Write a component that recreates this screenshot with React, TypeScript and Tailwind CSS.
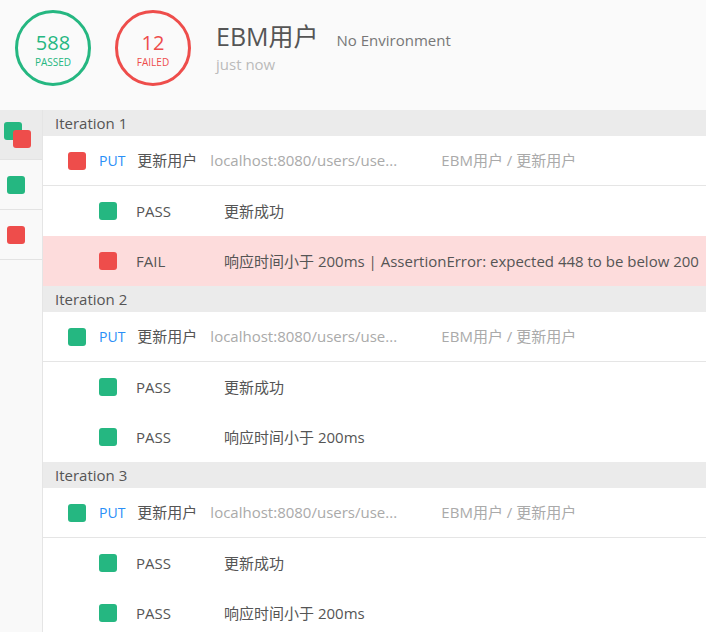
const GREEN = "bg-[#25b781]";
const RED = "bg-[#ee4d4b]";

type Test = { pass: boolean; text: string };
type Iteration = { name: string; pass: boolean; tests: Test[] };

const iterations: Iteration[] = [
  {
    name: "Iteration 1",
    pass: false,
    tests: [
      { pass: true, text: "更新成功" },
      { pass: false, text: "响应时间小于 200ms | AssertionError: expected 448 to be below 200" },
    ],
  },
  {
    name: "Iteration 2",
    pass: true,
    tests: [
      { pass: true, text: "更新成功" },
      { pass: true, text: "响应时间小于 200ms" },
    ],
  },
  {
    name: "Iteration 3",
    pass: true,
    tests: [
      { pass: true, text: "更新成功" },
      { pass: true, text: "响应时间小于 200ms" },
    ],
  },
];

const Square = ({ pass }: { pass: boolean }) => (
  <div className={`w-[18px] h-[18px] rounded-[3px] shrink-0 ${pass ? GREEN : RED}`} />
);

const Counter = ({ value, label, pass }: { value: number; label: string; pass: boolean }) => (
  <div
    className={`w-[76px] h-[76px] rounded-full border-[3px] flex flex-col items-center justify-center ${
      pass ? "border-[#25b781] text-[#25b781]" : "border-[#ee4d4b] text-[#ee4d4b]"
    }`}
  >
    <div className="text-[20px] leading-[24px] mt-[2px]">{value}</div>
    <div className="text-[10px] leading-[12px] mt-[1px]">{label}</div>
  </div>
);

export default function App() {
  return (
    <div
      className="w-[706px] h-[632px] overflow-hidden bg-white text-[#555]"
      style={{ fontFamily: '"Open Sans", "Noto Sans CJK SC", sans-serif' }}
    >
      <header className="h-[110px] bg-[#fafafa] flex items-start pt-[10px] pl-[15px]">
        <div className="flex gap-[24px]">
          <Counter value={588} label="PASSED" pass />
          <Counter value={12} label="FAILED" pass={false} />
        </div>
        <div className="ml-[25px] mt-[10px]">
          <div className="flex items-baseline">
            <span className="text-[25px] leading-[32px] text-[#555]">EBM用户</span>
            <span className="ml-[18px] text-[15px] text-[#777]">No Environment</span>
          </div>
          <div className="text-[15px] leading-[20px] text-[#bbb] mt-[2px]">just now</div>
        </div>
      </header>

      <div className="flex">
        <aside className="w-[43px] shrink-0 h-[522px] bg-[#f9f9f9] border-r border-[#e5e5e5]">
          <div className="h-[50px] bg-[#ebebeb] relative border-b border-[#e3e3e3]">
            <div className={`absolute left-[4px] top-[12px] w-[18px] h-[18px] rounded-[3px] ${GREEN}`} />
            <div className={`absolute left-[13px] top-[20px] w-[18px] h-[18px] rounded-[3px] ${RED}`} />
          </div>
          <div className="h-[50px] flex items-center pl-[7px] border-b border-[#e3e3e3]">
            <Square pass />
          </div>
          <div className="h-[50px] flex items-center pl-[7px] border-b border-[#e3e3e3]">
            <Square pass={false} />
          </div>
        </aside>

        <main className="flex-1 min-w-0">
          {iterations.map((it) => (
            <section key={it.name}>
              <div className="h-[26px] bg-[#ebebeb] pl-[12px] flex items-center text-[15px] text-[#555]">
                {it.name}
              </div>
              <div className="h-[50px] flex items-center pl-[25px] border-b border-[#e5e5e5] text-[15px]">
                <Square pass={it.pass} />
                <span className="ml-[13px] text-[#2a8ff7] text-[14px]">PUT</span>
                <span className="ml-[12px] text-[#555]">更新用户</span>
                <span className="ml-[13px] w-[231px] text-[#aaa] truncate">localhost:8080/users/use...</span>
                <span className="text-[#aaa]">EBM用户 / 更新用户</span>
              </div>
              {it.tests.map((t, i) => (
                <div
                  key={i}
                  className={`h-[50px] flex items-center pl-[56px] text-[15px] ${t.pass ? "" : "bg-[#fddcdc]"}`}
                >
                  <Square pass={t.pass} />
                  <span className="ml-[19px] w-[88px] text-[#555]">{t.pass ? "PASS" : "FAIL"}</span>
                  <span className="text-[#555] whitespace-nowrap">{t.text}</span>
                </div>
              ))}
            </section>
          ))}
        </main>
      </div>
    </div>
  );
}
